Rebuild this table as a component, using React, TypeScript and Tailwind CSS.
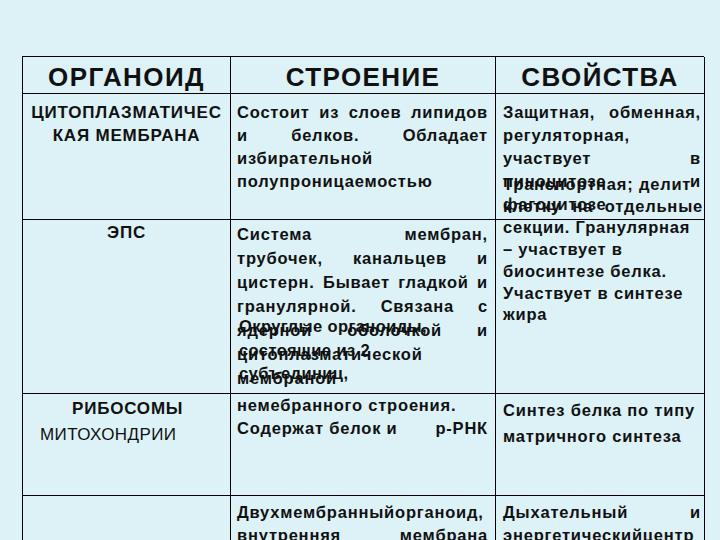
import React from "react";

type Line = { t: string; j?: boolean };

function Lines({ lines, lh, className = "" }: { lines: Line[]; lh: string; className?: string }) {
    return (
        <div className={`flex flex-col ${className}`}>
            {lines.map((l, i) => (
                <div
                    key={i}
                    className={`${lh} ${l.j ? "text-justify [text-align-last:justify]" : "whitespace-nowrap"}`}
                >
                    {l.t}
                </div>
            ))}
        </div>
    );
}

export default function App() {
    return (
        <div
            className="w-[720px] h-[540px] overflow-hidden bg-[#dcf2f6] text-[#111] pt-[56px] pl-[22px]"
            style={{ fontFamily: '"Liberation Sans", Arial, sans-serif' }}
        >
            <div className="relative w-[682px] border-t-[1.5px] border-l-[1.5px] border-black grid grid-cols-[208px_265px_209px] grid-rows-[37px_126px_174px_102px_60px]">
                {/* Header */}
                <div className="border-r-[1.5px] border-b-[1.5px] border-black flex items-center justify-center text-[26px] tracking-[1.4px] font-bold pt-[4px]">
                    ОРГАНОИД
                </div>
                <div className="border-r-[1.5px] border-b-[1.5px] border-black flex items-center justify-center text-[26px] tracking-[1.4px] font-bold pt-[4px]">
                    СТРОЕНИЕ
                </div>
                <div className="border-r-[1.5px] border-b-[1.5px] border-black flex items-center justify-center text-[26px] tracking-[1.4px] font-bold pt-[4px]">
                    СВОЙСТВА
                </div>

                {/* Row 1 */}
                <div className="border-r-[1.5px] border-b-[1.5px] border-black pt-[7px] text-center font-bold text-[17px] tracking-[0.8px]">
                    <Lines lh="leading-[23px]" lines={[{ t: "ЦИТОПЛАЗМАТИЧЕС" }, { t: "КАЯ МЕМБРАНА" }]} />
                </div>
                <div className="border-r-[1.5px] border-b-[1.5px] border-black pt-[7px] pl-[6px] pr-[7px] font-bold text-[16.5px] tracking-[0.8px]">
                    <Lines
                        lh="leading-[23px]"
                        lines={[
                            { t: "Состоит из слоев липидов", j: true },
                            { t: "и белков. Обладает", j: true },
                            { t: "избирательной" },
                            { t: "полупроницаемостью" },
                        ]}
                    />
                </div>
                <div className="border-r-[1.5px] border-b-[1.5px] border-black pt-[7px] pl-[7px] pr-[3px] font-bold text-[16.5px] tracking-[0.8px]">
                    <Lines
                        lh="leading-[23px]"
                        lines={[
                            { t: "Защитная, обменная,", j: true },
                            { t: "регуляторная," },
                            { t: "участвует в", j: true },
                            { t: "пиноцитозе и", j: true },
                            { t: "фагоцитозе" },
                        ]}
                    />
                </div>

                {/* Row 2 */}
                <div className="border-r-[1.5px] border-b-[1.5px] border-black pt-[1px] text-center font-bold text-[17px] tracking-[0.8px]">
                    <Lines lh="leading-[24px]" lines={[{ t: "ЭПС" }]} />
                </div>
                <div className="border-r-[1.5px] border-b-[1.5px] border-black pt-[2px] pl-[6px] pr-[7px] font-bold text-[16.5px] tracking-[0.8px]">
                    <Lines
                        lh="leading-[24px]"
                        lines={[
                            { t: "Система мембран,", j: true },
                            { t: "трубочек, канальцев и", j: true },
                            { t: "цистерн. Бывает гладкой и", j: true },
                            { t: "гранулярной. Связана с", j: true },
                            { t: "ядерной оболочкой и", j: true },
                            { t: "цитоплазматической" },
                            { t: "мембраной" },
                        ]}
                    />
                </div>
                <div className="border-r-[1.5px] border-b-[1.5px] border-black" />

                {/* Row 3 */}
                <div className="border-r-[1.5px] border-b-[1.5px] border-black pt-[2px] pl-[17px]">
                    <div className="leading-[26px] font-bold text-[17px] tracking-[0.8px] pl-[32px]">РИБОСОМЫ</div>
                    <div className="leading-[26px] font-normal text-[17px] tracking-[0.4px]">МИТОХОНДРИИ</div>
                </div>
                <div className="border-r-[1.5px] border-b-[1.5px] border-black pt-0 pl-[6px] pr-[7px] font-bold text-[16.5px] tracking-[0.8px]">
                    <div className="leading-[23px] whitespace-nowrap">немебранного строения.</div>
                    <div className="leading-[23px] flex justify-between whitespace-nowrap">
                        <span>Содержат белок и</span>
                        <span>р-РНК</span>
                    </div>
                </div>
                <div className="border-r-[1.5px] border-b-[1.5px] border-black pt-[3px] pl-[7px] pr-[3px] font-bold text-[16.5px] tracking-[0.8px]">
                    <Lines lh="leading-[26px]" lines={[{ t: "Синтез белка по типу" }, { t: "матричного синтеза" }]} />
                </div>

                {/* Row 4 */}
                <div className="border-r-[1.5px] border-black" />
                <div className="border-r-[1.5px] border-black pt-[5px] pl-[6px] pr-[7px] font-bold text-[16.5px] tracking-[0.8px]">
                    <Lines
                        lh="leading-[23px]"
                        lines={[{ t: "Двухмембранныйорганоид,", j: true }, { t: "внутренняя мембрана", j: true }]}
                    />
                </div>
                <div className="border-r-[1.5px] border-black pt-[5px] pl-[7px] pr-[3px] font-bold text-[16.5px] tracking-[0.8px]">
                    <Lines
                        lh="leading-[23px]"
                        lines={[{ t: "Дыхательный и", j: true }, { t: "энергетическийцентр" }]}
                    />
                </div>

                {/* overlapping text boxes from the slide */}
                <div className="absolute left-[480px] top-[117px] w-[200px] font-bold text-[16.5px] tracking-[0.8px]">
                    <Lines
                        lh="leading-[21.7px]"
                        lines={[
                            { t: "Транспортная; делит" },
                            { t: "клетку на отдельные", j: true },
                            { t: "секции. Гранулярная" },
                            { t: "– участвует в" },
                            { t: "биосинтезе белка." },
                            { t: "Участвует в синтезе" },
                            { t: "жира" },
                        ]}
                    />
                </div>
                <div className="absolute left-[216px] top-[258px] w-[220px] font-bold text-[16.5px] tracking-[0.4px]">
                    <Lines
                        lh="leading-[23.5px]"
                        lines={[{ t: "Округлые органоиды," }, { t: "состоящие из 2" }, { t: "субъединиц," }]}
                    />
                </div>
            </div>
        </div>
    );
}
